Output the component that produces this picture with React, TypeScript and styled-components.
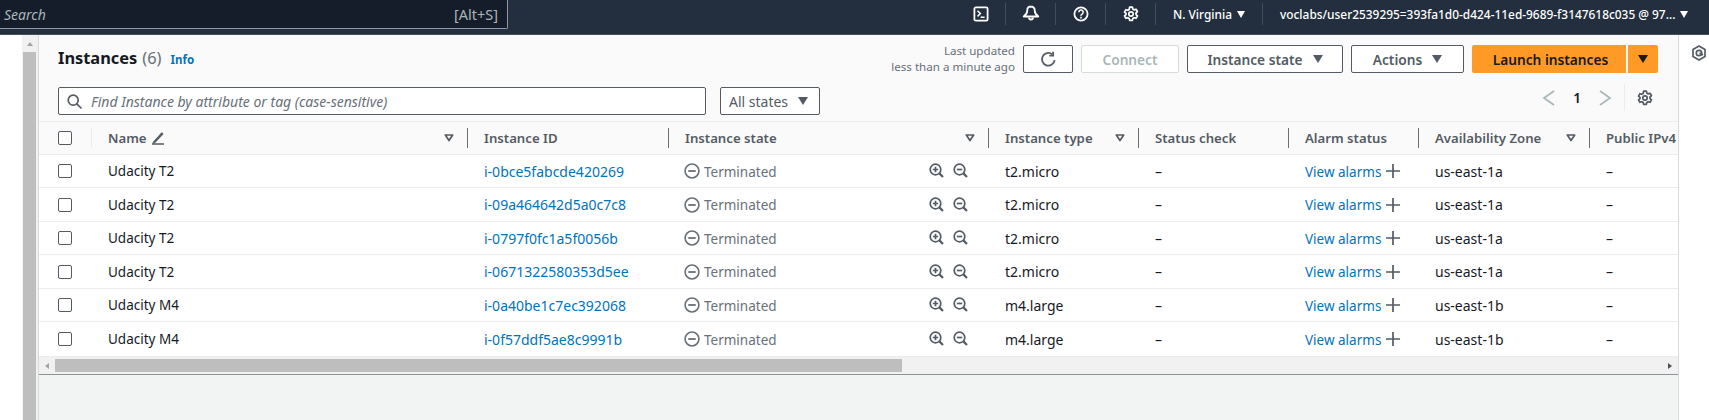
import React from "react";
import styled, { createGlobalStyle } from "styled-components";

const Global = createGlobalStyle`
  html, body { margin: 0; padding: 0; background: #fff; width: 1709px; height: 420px; overflow: hidden; }
  * { box-sizing: border-box; }
  body { font-family: "Noto Sans", "Open Sans", "Liberation Sans", sans-serif; font-size: 14px; color: #16191f; }
`;

const Page = styled.div`
  width: 1709px;
  height: 420px;
  display: flex;
  flex-direction: column;
  overflow: hidden;
`;

/* ---------- top bar ---------- */
const TopBar = styled.header`
  height: 35px;
  flex: none;
  background: #232f3e;
  border-bottom: 1px solid #444f5c;
  display: flex;
  align-items: flex-start;
  color: #fff;
`;
const SearchBox = styled.div`
  width: 508px;
  height: 29px;
  background: #161d2a;
  border: 1px solid #8d99a8;
  border-top: 0;
  border-left: 0;
  border-radius: 0 0 2px 0;
  display: flex;
  align-items: center;
  justify-content: space-between;
  padding: 0 9px 0 4px;
  font-size: 14px;
  color: #aab7b8;
`;
const SearchHint = styled.span`
  font-style: italic;
`;
const ShortcutHint = styled.span`
  font-size: 14.5px;
`;
const NavGroup = styled.div`
  margin-left: auto;
  width: 753px;
  display: flex;
  align-items: flex-start;
  height: 28px;
  padding-top: 3px;
`;
const NavIcon = styled.div`
  width: 50px;
  height: 22px;
  display: flex;
  align-items: center;
  justify-content: center;
  border-right: 1px solid #414d5c;
`;
const NavMenu = styled.div<{ $w: number; $last?: boolean }>`
  width: ${(p) => p.$w}px;
  height: 22px;
  display: flex;
  align-items: center;
  padding-left: 17px;
  gap: 5px;
  font-size: 11.9px;
  font-weight: 500;
  white-space: nowrap;
  border-right: ${(p) => (p.$last ? "0" : "1px solid #414d5c")};
`;
const NavCaret = styled.span`
  width: 0;
  height: 0;
  border-left: 4px solid transparent;
  border-right: 4px solid transparent;
  border-top: 7px solid #fff;
`;

/* ---------- body ---------- */
const Body = styled.div`
  flex: 1;
  display: flex;
  min-height: 0;
`;
const Gutter = styled.div`
  width: 22px;
  flex: none;
`;
const PageScroll = styled.div`
  width: 16px;
  flex: none;
  background: #f1f1f1;
  padding: 0 2px 0 1px;
  display: flex;
  flex-direction: column;
`;
const ScrollUp = styled.div`
  height: 17px;
  display: flex;
  justify-content: center;
  padding-top: 7px;
`;
const UpArrow = styled.span`
  width: 0;
  height: 0;
  border-left: 3.5px solid transparent;
  border-right: 3.5px solid transparent;
  border-bottom: 4px solid #a3a3a3;
`;
const PageThumb = styled.div`
  flex: 1;
  background: #bebebe;
`;
const Main = styled.main`
  width: 1641px;
  flex: none;
  background: #f2f3f3;
  border-left: 1px solid #d5dbdb;
  border-right: 1px solid #d5dbdb;
  display: flex;
  flex-direction: column;
`;
const Panel = styled.section`
  background: #fafafa;
  border-bottom: 1px solid #879596;
`;
const Toolbar = styled.div`
  height: 86px;
  padding: 10px 20px 0 19px;
  display: flex;
  flex-direction: column;
`;
const ToolRow = styled.div`
  height: 28px;
  display: flex;
  align-items: center;
`;
const Title = styled.h1`
  margin: -2px 0 0;
  font-size: 16.4px;
  font-weight: 700;
  line-height: 28px;
  color: #16191f;
`;
const Count = styled.span`
  font-weight: 400;
  color: #687078;
  margin-left: 5px;
`;
const Info = styled.a`
  font-size: 11.5px;
  font-weight: 700;
  color: #0073bb;
  margin-left: 9px;
  margin-top: 1px;
`;
const Spacer = styled.div`
  flex: 1;
`;
const Updated = styled.div`
  font-size: 11.6px;
  line-height: 16px;
  color: #687078;
  text-align: right;
  margin-right: 8px;
`;
const Btn = styled.button<{ $w: number; $disabled?: boolean }>`
  width: ${(p) => p.$w}px;
  height: 28px;
  margin-right: 8px;
  padding: 0;
  display: inline-flex;
  align-items: center;
  justify-content: center;
  gap: 10px;
  background: #fff;
  border: 1px solid ${(p) => (p.$disabled ? "#d5dbdb" : "#545b64")};
  border-radius: 2px;
  font-family: inherit;
  font-size: 13.7px;
  font-weight: 600;
  color: ${(p) => (p.$disabled ? "#aab7b8" : "#545b64")};
`;
const Launch = styled.button`
  width: 154px;
  height: 28px;
  padding: 0 0 0 3px;
  background: #ff9a26;
  border: 0;
  border-radius: 2px 0 0 2px;
  font-family: inherit;
  font-size: 13.7px;
  font-weight: 600;
  color: #16191f;
`;
const LaunchCaret = styled.button`
  width: 30px;
  height: 28px;
  margin-left: 2px;
  background: #ff9a26;
  border: 0;
  border-radius: 0 2px 2px 0;
  display: flex;
  align-items: center;
  justify-content: center;
`;
const Caret = styled.span<{ $color?: string }>`
  width: 0;
  height: 0;
  border-left: 5.5px solid transparent;
  border-right: 5.5px solid transparent;
  border-top: 8px solid ${(p) => p.$color || "#545b64"};
`;
const FilterRow = styled.div`
  margin-top: 14px;
  height: 28px;
  display: flex;
  align-items: center;
`;
const FilterInput = styled.div`
  width: 648px;
  height: 28px;
  background: #fff;
  border: 1px solid #545b64;
  border-radius: 2px;
  display: flex;
  align-items: center;
  padding-left: 8px;
  gap: 9px;
  font-size: 14px;
  font-style: italic;
  color: #687078;
`;
const StateSelect = styled.div`
  width: 100px;
  height: 28px;
  margin-left: 14px;
  background: #fff;
  border: 1px solid #545b64;
  border-radius: 2px;
  display: flex;
  align-items: center;
  padding-left: 8px;
  gap: 10px;
  font-size: 14px;
  color: #545b64;
`;
const Pager = styled.div`
  display: flex;
  align-items: center;
  height: 28px;
  margin: -7px 5px 0 0;
`;
const PageNo = styled.span`
  width: 40px;
  text-align: center;
  font-size: 13.5px;
  font-weight: 600;
  color: #16191f;
`;
const PagerDivider = styled.div`
  width: 1px;
  height: 27px;
  background: #eaeded;
  margin: 0 12px 0 11px;
`;

/* ---------- table ---------- */
const COLUMNS = "53px 376px 201px 320px 150px 150px 130px 171px 88px";

const Table = styled.div`
  width: 1639px;
  overflow: hidden;
`;
const HeaderRow = styled.div`
  display: grid;
  grid-template-columns: ${COLUMNS};
  height: 34px;
  background: #fafafa;
  border-top: 1px solid #eaeded;
  border-bottom: 1px solid #eaeded;
`;
const Row = styled.div<{ $h: number }>`
  display: grid;
  grid-template-columns: ${COLUMNS};
  height: ${(p) => p.$h}px;
  background: #fff;
  border-bottom: 1px solid #eaeded;
`;
const HeadCell = styled.div<{ $noSep?: boolean }>`
  position: relative;
  display: flex;
  align-items: center;
  padding: 0 14px 0 16px;
  font-size: 13.2px;
  font-weight: 600;
  color: #545b64;
  white-space: nowrap;
  overflow: hidden;
  &::after {
    content: "";
    display: ${(p) => (p.$noSep ? "none" : "block")};
    position: absolute;
    right: 0;
    top: 6px;
    bottom: 6px;
    width: 1px;
    background: #687078;
  }
`;
const HeadCheckCell = styled.div`
  position: relative;
  display: flex;
  align-items: center;
  padding-left: 19px;
  &::after {
    content: "";
    position: absolute;
    right: 0;
    top: 6px;
    bottom: 6px;
    width: 1px;
    background: #eaeded;
  }
`;
const LastHeadCell = styled(HeadCell)`
  padding-right: 0;
`;
const CheckCell = styled.div`
  display: flex;
  align-items: center;
  padding-left: 19px;
`;
const Check = styled.span`
  width: 14px;
  height: 14px;
  background: #fff;
  border: 1px solid #545b64;
  border-radius: 2px;
  display: block;
`;
const Cell = styled.div`
  display: flex;
  align-items: center;
  padding-left: 16px;
  font-size: 13.5px;
  color: #16191f;
  white-space: nowrap;
  overflow: hidden;
`;
const IdLink = styled.a`
  color: #0073bb;
  font-size: 14px;
`;
const AlarmLink = styled.a`
  color: #0073bb;
  padding-top: 1px;
`;
const DataCell = styled(Cell)`
  font-size: 14px;
`;
const StateCell = styled(Cell)`
  gap: 4px;
  color: #687078;
  padding-left: 15px;
  padding-right: 21px;
`;
const StateLabel = styled.span`
  padding-top: 1px;
`;
const Zooms = styled.span`
  margin-left: auto;
  display: flex;
  gap: 9px;
  margin-top: -1px;
`;
const SortMark = styled.svg`
  margin-left: auto;
  flex: none;
`;
const PencilMark = styled.svg`
  margin-left: 4px;
  flex: none;
`;
const AlarmCell = styled(Cell)`
  gap: 5px;
`;
const HScroll = styled.div`
  height: 17px;
  background: #f1f1f1;
  display: flex;
  align-items: center;
`;
const HLeft = styled.div`
  width: 16px;
  height: 17px;
  display: flex;
  align-items: center;
  justify-content: center;
`;
const HArrow = styled.span<{ $right?: boolean }>`
  width: 0;
  height: 0;
  border-top: 3.5px solid transparent;
  border-bottom: 3.5px solid transparent;
  ${(p) => (p.$right ? "border-left: 4px solid #505050;" : "border-right: 4px solid #a3a3a3;")}
`;
const HThumb = styled.div`
  width: 847px;
  height: 13px;
  background: #bebebe;
`;
const HRight = styled.div`
  margin-left: auto;
  width: 16px;
  display: flex;
  justify-content: center;
`;
const Side = styled.aside`
  flex: 1;
  padding: 10px 0 0 13px;
`;

/* ---------- icons ---------- */
const Terminal = () => (
  <svg width="16" height="16" viewBox="0 0 16 16" fill="none" stroke="#fff" strokeWidth="1.8">
    <rect x="1.4" y="1.4" width="13.2" height="13.2" rx="1.4" />
    <path d="M4.5 4.8 7.4 7.6 4.5 10.4M7.6 11.2h4" strokeWidth="1.5" />
  </svg>
);
const Bell = () => (
  <svg width="18" height="18" viewBox="0 0 18 18" fill="none" stroke="#fff" strokeWidth="1.8">
    <path d="M9 1.500c-2.800 0-3.800 2-3.800 4.500 0 2.500-1.500 4-3.500 5.500h14.600c-2-1.500-3.500-3-3.500-5.500 0-2.500-1-4.500-3.800-4.500z" strokeLinejoin="round" />
    <path d="M7 12.500a2 2 0 1 0 4 0" />
  </svg>
);
const Help = () => (
  <svg width="16" height="16" viewBox="0 0 16 16" fill="none" stroke="#fff" strokeWidth="1.8">
    <circle cx="8" cy="8" r="6.600" />
    <path d="M5.800 6.200a2.200 2.200 0 1 1 3.200 2c-.7.4-1 .8-1 1.500" strokeWidth="1.600" />
    <path d="M8 10.800v1.600" strokeWidth="1.600" />
  </svg>
);
const Gear = ({ color = "#fff" }: { color?: string }) => (
  <svg width="16" height="16" viewBox="0 0 16 16" fill="none" stroke={color} strokeWidth="1.700">
    <circle cx="8" cy="8" r="2.200" />
    <path d="M6.600 1.200h2.800l.4 1.900 1.400.8 1.900-.6 1.400 2.400-1.500 1.300v1.600l1.500 1.300-1.400 2.400-1.900-.6-1.400.8-.4 1.900H6.600l-.4-1.900-1.400-.8-1.900.6-1.400-2.400 1.500-1.300V7.400L1.500 6.100l1.400-2.400 1.900.6 1.400-.8z" strokeLinejoin="round" />
  </svg>
);
const Refresh = () => (
  <svg width="17" height="17" viewBox="0 0 16 16" fill="none" stroke="#545b64" strokeWidth="1.700">
    <path d="M13.800 8.500A6 6 0 1 1 11.500 3" />
    <path d="M12.400.8v3.600H8.800" />
  </svg>
);
const SearchIcon = () => (
  <svg width="15" height="15" viewBox="0 0 15 15" fill="none" stroke="#545b64" strokeWidth="1.700">
    <circle cx="6.200" cy="6.200" r="5" />
    <path d="M9.800 9.800 14 14" strokeLinecap="round" />
  </svg>
);
const Chevron = ({ right }: { right?: boolean }) => (
  <svg width="16" height="16" viewBox="0 0 16 16" fill="none" stroke="#aab7b8" strokeWidth="1.700">
    <path d={right ? "M3 1l10 7-10 7" : "M13 1 3 8l10 7"} />
  </svg>
);
const Pencil = () => (
  <PencilMark width="14" height="14" viewBox="0 0 14 14" fill="none" stroke="#545b64">
    <path d="M1 13h12" strokeWidth="1.500" />
    <path d="M2.500 10.800 10.800 1.600l1.400 1.300-8.300 8.800-2 .5z" fill="#545b64" strokeWidth=".8" />
  </PencilMark>
);
const Sort = () => (
  <SortMark width="10" height="8" viewBox="0 0 10 8" fill="none" stroke="#545b64" strokeWidth="1.700">
    <path d="M1.300 1h7.400L5 6.500z" strokeLinejoin="round" />
  </SortMark>
);
const Stopped = () => (
  <svg width="16" height="16" viewBox="0 0 15 15" fill="none" stroke="#687078" strokeWidth="1.500">
    <circle cx="7.500" cy="7.500" r="6.500" />
    <path d="M4 7.500h7" strokeWidth="1.700" />
  </svg>
);
const Magnifier = ({ plus }: { plus?: boolean }) => (
  <svg width="15" height="15" viewBox="0 0 15 15" fill="none" stroke="#545b64" strokeWidth="1.700">
    <circle cx="6.500" cy="6.500" r="5.300" />
    <path d="M10.400 10.400 14 14" strokeWidth="2.200" />
    <path d={plus ? "M3.800 6.500h5.400M6.500 3.800v5.400" : "M3.800 6.500h5.400"} />
  </svg>
);
const Plus = () => (
  <svg width="14" height="14" viewBox="0 0 14 14" fill="none" stroke="#545b64" strokeWidth="1.700">
    <path d="M0 7h14M7 0v14" />
  </svg>
);
const Hexagon = () => (
  <svg width="14" height="16" viewBox="0 0 14 16" fill="none" stroke="#545b64" strokeWidth="1.700">
    <path d="M7 1 13 4.500v7L7 15 1 11.500v-7z" strokeLinejoin="round" />
    <circle cx="7" cy="8" r="2.700" />
    <path d="M7.500 8 11 10" />
  </svg>
);

/* ---------- data ---------- */
const rows = [
  { name: "Udacity T2", id: "i-0bce5fabcde420269", type: "t2.micro", az: "us-east-1a", h: 33 },
  { name: "Udacity T2", id: "i-09a464642d5a0c7c8", type: "t2.micro", az: "us-east-1a", h: 34 },
  { name: "Udacity T2", id: "i-0797f0fc1a5f0056b", type: "t2.micro", az: "us-east-1a", h: 33 },
  { name: "Udacity T2", id: "i-0671322580353d5ee", type: "t2.micro", az: "us-east-1a", h: 34 },
  { name: "Udacity M4", id: "i-0a40be1c7ec392068", type: "m4.large", az: "us-east-1b", h: 33 },
  { name: "Udacity M4", id: "i-0f57ddf5ae8c9991b", type: "m4.large", az: "us-east-1b", h: 35 },
];

export default function App() {
  return (
    <Page>
      <Global />
      <TopBar>
        <SearchBox>
          <SearchHint>Search</SearchHint>
          <ShortcutHint>[Alt+S]</ShortcutHint>
        </SearchBox>
        <NavGroup>
          <NavIcon><Terminal /></NavIcon>
          <NavIcon><Bell /></NavIcon>
          <NavIcon><Help /></NavIcon>
          <NavIcon><Gear /></NavIcon>
          <NavMenu $w={107}>N. Virginia <NavCaret /></NavMenu>
          <NavMenu $w={446} $last>voclabs/user2539295=393fa1d0-d424-11ed-9689-f3147618c035 @ 97... <NavCaret /></NavMenu>
        </NavGroup>
      </TopBar>
      <Body>
        <Gutter />
        <PageScroll>
          <ScrollUp><UpArrow /></ScrollUp>
          <PageThumb />
        </PageScroll>
        <Main>
          <Panel>
            <Toolbar>
              <ToolRow>
                <Title>Instances<Count>(6)</Count></Title>
                <Info>Info</Info>
                <Spacer />
                <Updated>Last updated<br />less than a minute ago</Updated>
                <Btn $w={50}><Refresh /></Btn>
                <Btn $w={98} $disabled>Connect</Btn>
                <Btn $w={156}>Instance state <Caret /></Btn>
                <Btn $w={113}>Actions <Caret /></Btn>
                <Launch>Launch instances</Launch>
                <LaunchCaret><Caret $color="#16191f" /></LaunchCaret>
              </ToolRow>
              <FilterRow>
                <FilterInput><SearchIcon />Find Instance by attribute or tag (case-sensitive)</FilterInput>
                <StateSelect>All states <Caret /></StateSelect>
                <Spacer />
                <Pager>
                  <Chevron />
                  <PageNo>1</PageNo>
                  <Chevron right />
                  <PagerDivider />
                  <Gear color="#545b64" />
                </Pager>
              </FilterRow>
            </Toolbar>
            <Table>
              <HeaderRow>
                <HeadCheckCell><Check /></HeadCheckCell>
                <HeadCell>Name <Pencil /><Sort /></HeadCell>
                <HeadCell>Instance ID</HeadCell>
                <HeadCell>Instance state<Sort /></HeadCell>
                <HeadCell>Instance type<Sort /></HeadCell>
                <HeadCell>Status check</HeadCell>
                <HeadCell>Alarm status</HeadCell>
                <HeadCell>Availability Zone<Sort /></HeadCell>
                <LastHeadCell $noSep>Public IPv4</LastHeadCell>
              </HeaderRow>
              {rows.map((r) => (
                <Row key={r.id} $h={r.h}>
                  <CheckCell><Check /></CheckCell>
                  <Cell>{r.name}</Cell>
                  <Cell><IdLink>{r.id}</IdLink></Cell>
                  <StateCell>
                    <Stopped />
                    <StateLabel>Terminated</StateLabel>
                    <Zooms><Magnifier plus /><Magnifier /></Zooms>
                  </StateCell>
                  <DataCell>{r.type}</DataCell>
                  <DataCell>–</DataCell>
                  <AlarmCell><AlarmLink>View alarms</AlarmLink><Plus /></AlarmCell>
                  <DataCell>{r.az}</DataCell>
                  <DataCell>–</DataCell>
                </Row>
              ))}
              <HScroll>
                <HLeft><HArrow /></HLeft>
                <HThumb />
                <HRight><HArrow $right /></HRight>
              </HScroll>
            </Table>
          </Panel>
        </Main>
        <Side><Hexagon /></Side>
      </Body>
    </Page>
  );
}
